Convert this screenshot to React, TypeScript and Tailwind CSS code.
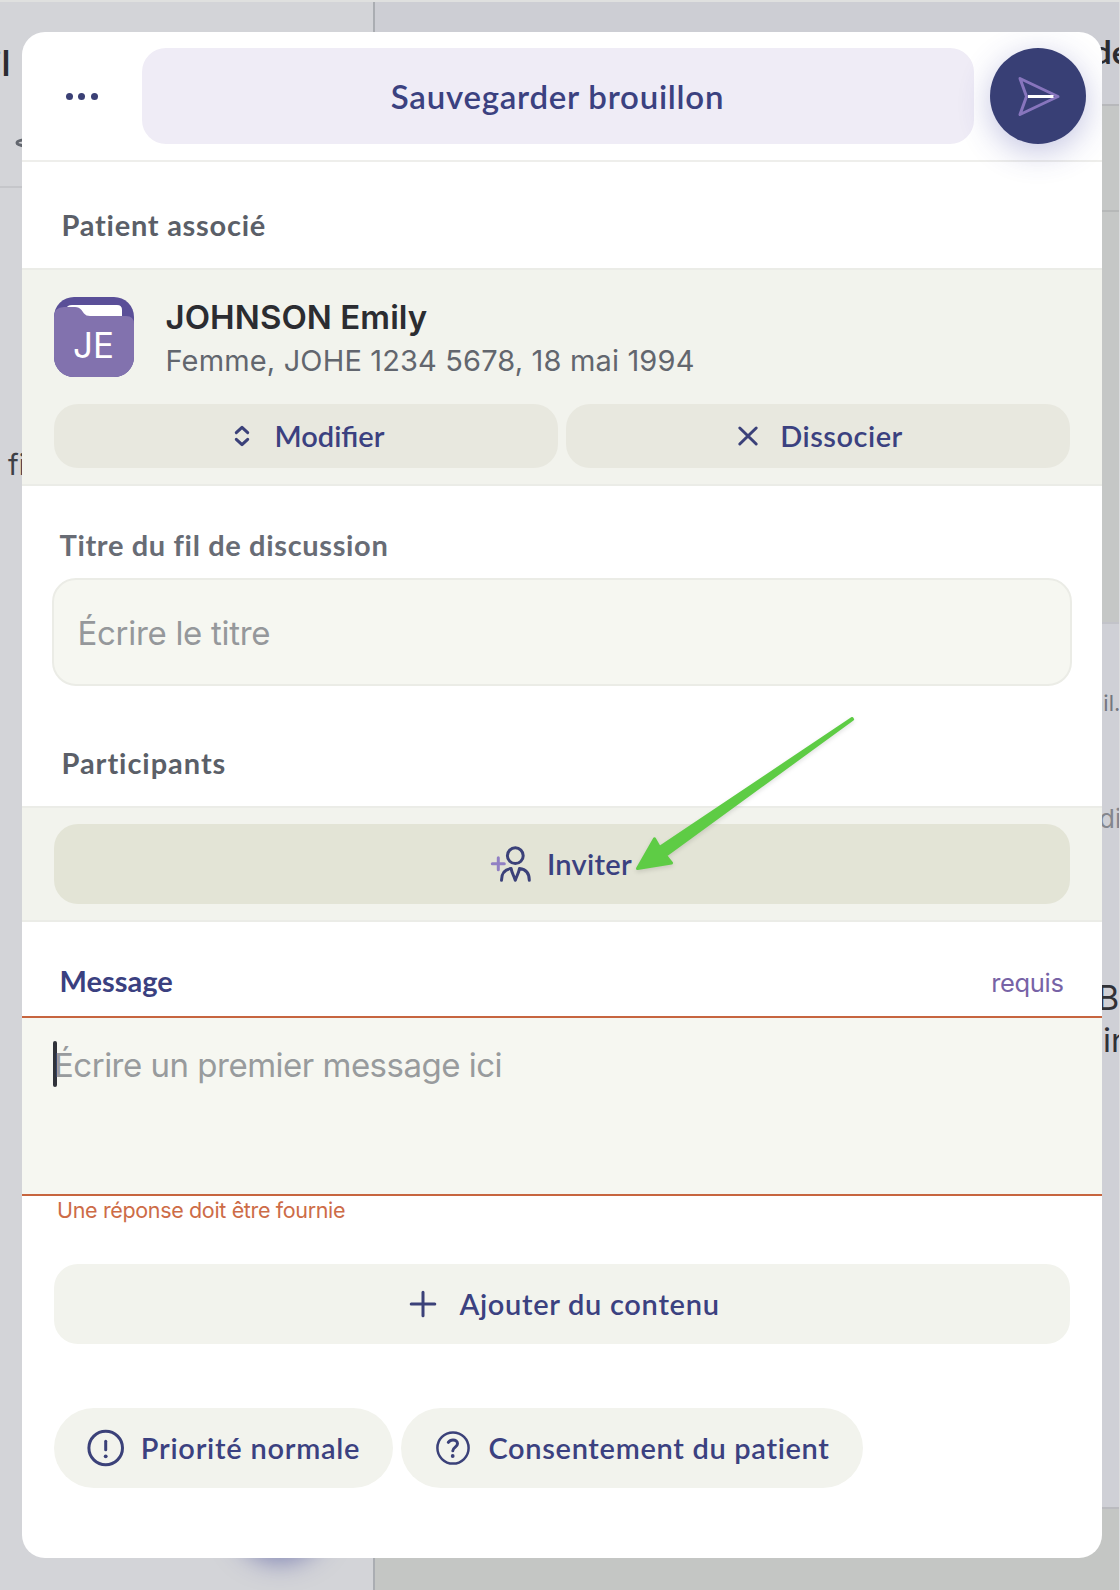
import type { ReactNode } from "react";

const NAVY = "#3b4179";

function Backdrop() {
  return (
    <div className="flex h-[1590px] w-[1120px] flex-col overflow-hidden border-t-2 border-[#dfe0df] bg-[#d3d4d8]">
      <div className="flex flex-1">
        <div className="flex w-[375px] shrink-0 flex-col overflow-hidden border-r-2 border-[#aaadb2]">
          <div className="h-[186px] border-b-2 border-[#c5c6ca] pt-[39px]">
            <div className="-ml-[7px] font-['Lato',sans-serif] text-[34px] leading-[44px] font-bold text-[#2b2c31]">il</div>
            <svg className="mt-[53px] ml-[14px]" width="16" height="10" viewBox="0 0 16 10" fill="none" stroke="#62666e" strokeWidth="3">
              <path d="M14 2 C9 1.5 3 2.5 3 5 C3 6.5 6 7 14 9" />
            </svg>
          </div>
          <div className="mt-[255px] ml-2 font-['Inter',sans-serif] text-[29px] leading-[44px] text-[#3e4046]">fil</div>
          <div className="mt-auto mb-[36px] ml-[232px] size-24 rounded-full bg-[#373e75] shadow-[0_8px_26px_rgba(58,64,150,0.55)]" />
        </div>
        <div className="flex flex-1 flex-col overflow-hidden border-r border-[#dcdddf] bg-[#cfd0d6]">
          <div className="h-[104px] border-b-2 border-[#b7b8bb] bg-[#cdced4] pt-[27px] pl-[718px] font-['Lato',sans-serif] text-[33px] leading-[44px] font-bold text-[#2b2c31]">de</div>
          <div className="h-[106px] border-b-2 border-[#b6b8b8] bg-[#c5c7c6]" />
          <div className="h-[412px] border-b-2 border-[#c2c3c9] bg-[#c5c7c6]" />
          <div className="flex h-[885px] flex-col border-b-2 border-[#babbbf] font-['Inter',sans-serif] whitespace-nowrap text-[#303137]">
            <div className="mt-[65px] ml-[716px] text-[22px] leading-[28px] text-[#73767e]">ail.</div>
            <div className="mt-[86px] ml-[724px] text-[26px] leading-[32px] text-[#84868d]">di</div>
            <div className="mt-[141px] ml-[722px] text-[34px] leading-[43px]">B</div>
            <div className="ml-[728px] text-[33px] leading-[42px]">in</div>
          </div>
          <div className="flex-1 bg-[#c4c6c4]" />
        </div>
      </div>
    </div>
  );
}

function FolderAvatar() {
  return (
    <div className="grid size-20 shrink-0 overflow-hidden rounded-[20px] bg-[#5a4f98]">
      <svg className="col-start-1 row-start-1" width="80" height="80" viewBox="0 0 80 80">
        <path d="M12 12 Q13 8 18 8 H63 Q68 8 68 13 V30 H12 Z" fill="#fff" />
        <path d="M0 20 Q0 10 10 10 H21 Q25 10 27.500 13 L30 16.500 Q32 19 36 19 H72 Q80 19 80 27 V80 H0 Z" fill="#8272ae" />
      </svg>
      <span className="col-start-1 row-start-1 pt-[26px] text-center text-[35px] leading-[44px] text-white">JE</span>
    </div>
  );
}

function ChevronsIcon() {
  return (
    <svg width="32" height="32" viewBox="0 0 32 32" fill="none" stroke={NAVY} strokeWidth="3" strokeLinecap="round" strokeLinejoin="round">
      <path d="M9.300 12.700 L15 7.300 L20.700 12.700" />
      <path d="M9.300 19.300 L15 24.700 L20.700 19.300" />
    </svg>
  );
}

function CrossIcon() {
  return (
    <svg width="32" height="32" viewBox="0 0 32 32" fill="none" stroke={NAVY} strokeWidth="3" strokeLinecap="round">
      <path d="M7.800 8 L24.200 24 M24.200 8 L7.800 24" />
    </svg>
  );
}

function InviteIcon() {
  return (
    <svg width="40" height="40" viewBox="0 0 40 40" fill="none" stroke={NAVY} strokeWidth="3" strokeLinecap="round" strokeLinejoin="round" overflow="visible">
      <g transform="translate(-0.700 0)">
        <path d="M2 19.700 H14 M8 13.700 V25.700" stroke="#9180c4" />
        <circle cx="25" cy="11.700" r="7.900" />
        <path d="M11.200 36.300 C11.200 29.500 14.500 25.200 20.800 24.500 C21.500 29 23.500 31.500 25 36.300 C26.500 31.500 28.500 29 29.200 24.500 C35.500 25.200 39 29.500 39 36.300" />
      </g>
    </svg>
  );
}

function PlusIcon() {
  return (
    <svg width="40" height="40" viewBox="0 0 40 40" stroke={NAVY} strokeWidth="3" strokeLinecap="round">
      <path d="M8.200 20 H31.800 M20 8.200 V31.800" />
    </svg>
  );
}

function PriorityIcon() {
  return (
    <svg width="40" height="40" viewBox="0 0 40 40" fill="none" stroke={NAVY} strokeWidth="3" strokeLinecap="round">
      <circle cx="19.700" cy="20" r="16.800" />
      <path d="M19.700 13.200 V21.800" />
      <circle cx="19.700" cy="28.300" r="1.900" fill={NAVY} stroke="none" />
    </svg>
  );
}

function QuestionIcon() {
  return (
    <svg width="40" height="40" viewBox="0 0 40 40" fill="none" stroke={NAVY} strokeWidth="2.500" strokeLinecap="round" strokeLinejoin="round">
      <circle cx="20" cy="20" r="15.600" />
      <path d="M15.300 14.300 C16.500 12.600 18.100 12 20 12 C22.500 12 24.500 13.400 24.500 15.800 C24.500 19 19.800 19.200 19.800 22.800" strokeWidth="3" />
      <circle cx="19.700" cy="28" r="1.900" fill={NAVY} stroke="none" />
    </svg>
  );
}

function SendIcon() {
  return (
    <svg width="96" height="96" viewBox="0 0 96 96" fill="none" strokeWidth="3" strokeLinecap="round" strokeLinejoin="round">
      <path d="M30 30.500 L68 48.500 L30 66.500 L36.500 48.500 Z" stroke="#8775bd" />
      <path d="M38 48.500 H63.500" stroke="#fff" strokeLinecap="butt" />
    </svg>
  );
}

function Action({ className, children }: { className: string; children: ReactNode }) {
  return (
    <button
      className={
        "flex items-center justify-center gap-4 font-['Lato',sans-serif] font-semibold whitespace-nowrap text-[#3b4180] " +
        className
      }
    >
      {children}
    </button>
  );
}

function Arrow() {
  return (
    <svg
      className="pointer-events-none absolute top-[678px] left-[608px] drop-shadow-[0_2px_2px_rgba(0,0,0,0.12)]"
      width="240"
      height="170"
      viewBox="630 710 240 170"
      fill="#5ecc45"
      stroke="#5ecc45"
      strokeWidth="3"
      strokeLinejoin="round"
    >
      <path d="M637.500 868.500 L654.500 838.800 L659.500 847.500 L852 718.500 L852.600 719.300 L665.500 855.500 L671.500 863 Z" />
    </svg>
  );
}

export default function App() {
  return (
    <div className="relative h-[1590px] w-[1120px] overflow-hidden">
      <Backdrop />
      <main className="absolute top-8 left-[21.500px] flex h-[1526px] w-[1080px] flex-col overflow-hidden rounded-[23px] bg-white font-['Inter',sans-serif]">
        <header className="flex h-[130px] shrink-0 gap-4 border-b-2 border-[#eeeeeb] p-4">
          <button className="flex w-[88px] items-center justify-center gap-[5.500px]">
            <span className="size-[7px] rounded-full bg-[#3b4075]" />
            <span className="size-[7px] rounded-full bg-[#3b4075]" />
            <span className="size-[7px] rounded-full bg-[#3b4075]" />
          </button>
          <Action className="h-24 flex-1 rounded-3xl bg-[#efecf6] pt-px text-[33px] tracking-[0.75px]">Sauvegarder brouillon</Action>
          <button className="size-24 rounded-full bg-[#383f75] shadow-[0_8px_32px_rgba(60,64,160,0.3)]">
            <SendIcon />
          </button>
        </header>

        <h2 className="pt-[45px] pb-[25px] pl-[40px] font-['Lato',sans-serif] text-[29px] leading-[36px] font-bold tracking-[0.75px] text-[#5b5f68]">
          Patient associé
        </h2>
        <section className="border-y-2 border-[#ebece7] bg-[#f2f3ed] px-8 pt-[27px] pb-4">
          <div className="flex h-20 gap-8">
            <FolderAvatar />
            <div className="-mt-px whitespace-nowrap">
              <div className="text-[33px] leading-[42px] font-semibold tracking-[0.06px] text-[#2b2c31]">JOHNSON Emily</div>
              <div className="pt-px text-[29px] leading-[44px] tracking-[0.15px] text-[#62666e]">Femme, JOHE 1234 5678, 18 mai 1994</div>
            </div>
          </div>
          <div className="mt-[27px] grid grid-cols-2 gap-2">
            <Action className="h-16 rounded-3xl bg-[#e8e8df] text-[29px]">
              <ChevronsIcon />
              Modifier
            </Action>
            <Action className="h-16 rounded-3xl bg-[#e8e8df] text-[29px] tracking-[0.5px]">
              <CrossIcon />
              Dissocier
            </Action>
          </div>
        </section>

        <label className="pt-[41px] pb-[15px] pl-[38px] font-['Lato',sans-serif] text-[29px] leading-[36px] font-bold tracking-[0.65px] text-[#686c75]">
          Titre du fil de discussion
        </label>
        <div className="mx-[30px] flex h-[108px] shrink-0 items-center rounded-3xl border-2 border-[#ebece6] bg-[#f6f7f1] pt-1 pl-[24px] text-[33px] tracking-[-0.3px] text-[#95989b]">
          Écrire le titre
        </div>

        <h2 className="pt-[59px] pb-[25px] pl-[40px] font-['Lato',sans-serif] text-[29px] leading-[36px] font-bold tracking-[0.95px] text-[#5b5f68]">
          Participants
        </h2>
        <section className="border-y-2 border-[#ebece7] bg-[#f2f3ed] px-8 py-4">
          <Action className="h-20 w-full rounded-3xl bg-[#e3e4d6] text-[29px] tracking-[0.3px]">
            <InviteIcon />
            Inviter
          </Action>
        </section>

        <div className="flex h-[94px] shrink-0 justify-between pt-[41px] pr-[38px] pl-[38px] leading-[36px]">
          <span className="font-['Lato',sans-serif] text-[29px] font-bold text-[#3a4080]">Message</span>
          <span className="pt-0.5 text-[25.500px] tracking-[-0.35px] text-[#7763a6]">requis</span>
        </div>
        <div className="flex h-[180px] shrink-0 border-y-2 border-[#c7653f] bg-[#f6f7f1] pt-[23px] pl-[31.500px]">
          <span className="h-[46px] w-1 rounded-sm bg-[#30323a]" />
          <span className="-ml-[3px] pt-0.5 text-[33px] leading-[44px] tracking-[-0.5px] text-[#989b9d]">Écrire un premier message ici</span>
        </div>
        <p className="pl-[35.500px] text-[21.500px] leading-[28px] tracking-[-0.35px] text-[#cd6c47]">Une réponse doit être fournie</p>

        <Action className="mx-8 mt-10 h-20 shrink-0 rounded-3xl bg-[#f2f3ed] text-[29px] tracking-[0.7px]">
          <PlusIcon />
          Ajouter du contenu
        </Action>
        <div className="mt-16 flex gap-2 px-8">
          <Action className="h-20 w-[339px] rounded-full bg-[#f2f3ed] text-[29px] tracking-[0.75px]">
            <PriorityIcon />
            <span className="-ml-px">Priorité normale</span>
          </Action>
          <Action className="h-20 w-[462px] rounded-full bg-[#f2f3ed] text-[29px] tracking-[0.68px]">
            <QuestionIcon />
            <span className="-ml-px">Consentement du patient</span>
          </Action>
        </div>
        <Arrow />
      </main>
    </div>
  );
}
